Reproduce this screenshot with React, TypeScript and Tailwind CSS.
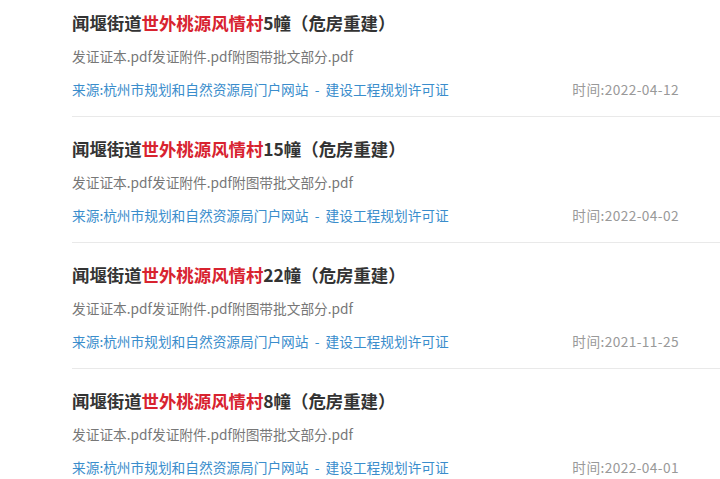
const items = [
  { no: "5", date: "2022-04-12" },
  { no: "15", date: "2022-04-02" },
  { no: "22", date: "2021-11-25" },
  { no: "8", date: "2022-04-01" },
];

export default function App() {
  return (
    <div className="w-[720px] h-[479px] overflow-hidden bg-white font-['Noto_Sans_CJK_SC',sans-serif]">
      <ul className="ml-[72px]">
        {items.map((it, i) => (
          <li
            key={i}
            className={`border-b border-[#e9e9e9] pr-[41px] pb-[17px] ${i === 0 ? "pt-[11px]" : "pt-[20px]"}`}
          >
            <h3 className="text-[17.4px] leading-[24px] font-bold text-[#333]">
              闻堰街道<span className="text-[#d8232f]">世外桃源风情村</span>
              {it.no}幢（危房重建）
            </h3>
            <p className="mt-[11px] text-[13.7px] leading-[20px] text-[#777]">
              发证证本.pdf发证附件.pdf附图带批文部分.pdf
            </p>
            <div className="mt-[13px] flex justify-between text-[13.7px] leading-[20px]">
              <span className="text-[#3a8dcc] whitespace-pre">来源:杭州市规划和自然资源局门户网站  -  建设工程规划许可证</span>
              <span className="text-[#999] tracking-[0.4px]">时间:{it.date}</span>
            </div>
          </li>
        ))}
      </ul>
    </div>
  );
}
